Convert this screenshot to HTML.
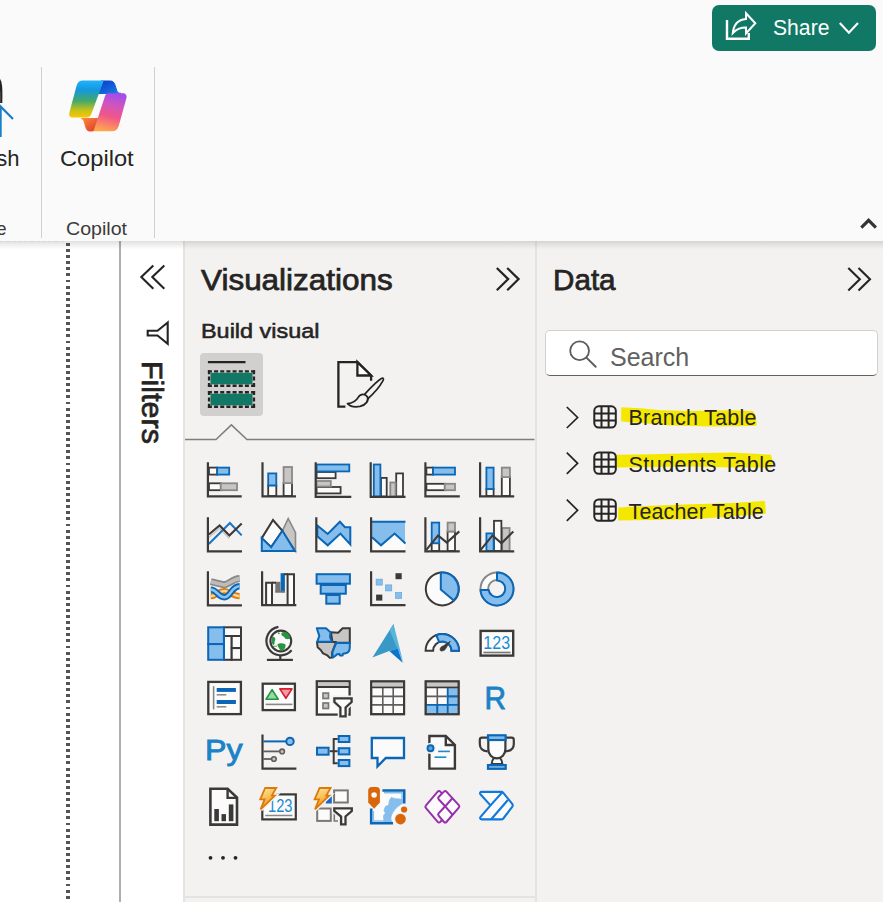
<!DOCTYPE html>
<html lang="en">
<head>
<meta charset="utf-8">
<title>Power BI</title>
<style>
html,body{margin:0;padding:0;}
body{width:883px;height:902px;overflow:hidden;background:#ffffff;font-family:"Liberation Sans",sans-serif;color:#252423;position:relative;}
.abs{position:absolute;}
.t{position:absolute;white-space:nowrap;line-height:1;transform-origin:0 0;}
.sb{-webkit-text-stroke:0.75px currentColor;}
svg{position:absolute;overflow:visible;left:0;top:0;}
svg text{font-family:"Liberation Sans",sans-serif;}
#ribbon{left:0;top:0;width:883px;height:240.8px;background:#fafafa;}
#ribshadow{left:0;top:240.8px;width:883px;height:9px;background:linear-gradient(rgba(0,0,0,0.12),rgba(0,0,0,0.04) 60%,rgba(0,0,0,0));}
.vsep{position:absolute;width:1px;background:#d0d0d0;top:67px;height:171px;}
#share{left:712px;top:4.5px;width:164px;height:46.5px;border-radius:7px;background:#117865;}
#vizpane{left:183px;top:241px;width:352.5px;height:661px;background:#f3f2f1;border-left:2px solid #e5e3e1;box-sizing:border-box;}
#datapane{left:535.3px;top:241px;width:348px;height:661px;background:#f3f2f1;border-left:2.2px solid #e5e3e1;box-sizing:border-box;}
#filtline{left:119.2px;top:241px;width:1.8px;height:661px;background:#b0aeac;}
#dotline{left:66.3px;top:242.9px;width:3.6px;height:660px;background:repeating-linear-gradient(#555 0,#555 2.9px,transparent 2.9px,transparent 6.1px);}
#dashtop{left:0;top:240.9px;width:66px;height:1px;background:repeating-linear-gradient(90deg,#d8d8d8 0,#d8d8d8 4px,transparent 4px,transparent 6px);}
#search{left:545px;top:330px;width:333px;height:45.8px;background:#fff;border:1px solid #d1d1d1;border-bottom:1.5px solid #616161;border-radius:5px;box-sizing:border-box;}
#seltab{left:200px;top:352.8px;width:62.6px;height:62.8px;border-radius:4px;background:#d2d0ce;}
</style>
</head>
<body>
<!-- RIBBON -->
<div id="ribbon" class="abs"></div>
<div class="vsep" style="left:40.5px"></div>
<div class="vsep" style="left:154px"></div>
<div id="share" class="abs"></div>
<div class="t" style="left:773px;top:17px;font-size:22.5px;color:#fff;transform:scaleX(0.94);">Share</div>
<div class="t" style="left:60px;top:148px;font-size:22px;transform:scaleX(1.075);">Copilot</div>
<div class="t" style="left:66px;top:220px;font-size:18px;color:#3b3a39;transform:scaleX(1.09);">Copilot</div>
<div class="abs" style="left:0;top:140px;width:19.5px;height:34px;overflow:hidden;"><div class="t" style="right:0;top:8px;font-size:22px;">Refresh</div></div>
<div class="abs" style="left:0;top:212px;width:6.5px;height:28px;overflow:hidden;"><div class="t" style="right:0;top:8px;font-size:18px;color:#3b3a39;">Home</div></div>
<!-- CANVAS -->
<div id="dotline" class="abs"></div>
<div id="filtline" class="abs"></div>
<div id="vizpane" class="abs"></div>
<div id="datapane" class="abs"></div>
<div id="ribshadow" class="abs"></div>
<div id="dashtop" class="abs"></div>
<!-- FILTERS -->
<div class="t sb" style="left:166.5px;top:361px;font-size:30px;transform:rotate(90deg) scaleX(1.015);">Filters</div>
<!-- VIZ PANE -->
<div class="t sb" style="left:200.6px;top:264px;font-size:30.4px;transform:scaleX(1.035);">Visualizations</div>
<div class="t sb" style="left:201.2px;top:320px;font-size:21px;-webkit-text-stroke-width:0.55px;transform:scaleX(1.115);">Build visual</div>
<div id="seltab" class="abs"></div>
<!-- DATA PANE -->
<div class="t sb" style="left:553px;top:264px;font-size:30.4px;transform:scaleX(0.975);">Data</div>
<div id="search" class="abs"></div>
<div class="t" style="left:610px;top:344.5px;font-size:25px;color:#616161;">Search</div>
<!-- chrome icons -->
<svg width="883" height="902" viewBox="0 0 883 902">
<defs>
<linearGradient id="cpL" x1="0" y1="0" x2="0" y2="1"><stop offset="0" stop-color="#22b2fb"/><stop offset="0.25" stop-color="#1598e0"/><stop offset="0.55" stop-color="#44a86a"/><stop offset="0.8" stop-color="#c4c21c"/><stop offset="1" stop-color="#f7c800"/></linearGradient>
<linearGradient id="cpR" x1="0.6" y1="0" x2="0.4" y2="1"><stop offset="0" stop-color="#a44dea"/><stop offset="0.3" stop-color="#cf55bd"/><stop offset="0.6" stop-color="#f0558a"/><stop offset="1" stop-color="#ffa64d"/></linearGradient>
<linearGradient id="cpT" x1="0" y1="0" x2="1" y2="1"><stop offset="0" stop-color="#0a3ac8"/><stop offset="1" stop-color="#1a80e6"/></linearGradient>
<linearGradient id="cpB" x1="0" y1="0" x2="1" y2="1"><stop offset="0" stop-color="#ff8a3d"/><stop offset="1" stop-color="#d93a2a"/></linearGradient>
</defs>
<!-- highlights -->
<polygon fill="#f5e800" points="621.2,407.2 640.6,408.2 661,410.3 691.5,410.9 732.3,410.3 752.7,410.9 755.7,415.4 756.8,425.6 752.7,426 712,426.6 671,425.6 640.6,423.1 621.2,421.5"/>
<polygon fill="#f5e800" points="616.300,454.700 650.800,454.300 691.500,453.200 732.300,452.600 771,454.700 773,462.400 772,467.500 732.300,467.500 691.500,466.500 650.800,467.100 616.300,467.500"/>
<polygon fill="#f5e800" points="618.200,507.400 650.800,505.800 691.500,504.300 732.300,502.900 764.900,500.900 765.900,513.500 732.300,516.600 691.500,519.200 650.800,520 618.200,520.600"/>
<!-- share icon -->
<path d="M727,20 V38.8 H748.8 V33" fill="none" stroke="#fff" stroke-width="2.4"/>
<path d="M746,13.2 L755.3,23.3 L746,33.4 V27.6 C740,27.6 736,29.6 732.8,33.2 C733.5,25 738,19.6 746,18.9 Z" fill="none" stroke="#fff" stroke-width="2" stroke-linejoin="miter"/>
<path d="M839.8,23 L848.9,32.6 L858,23" fill="none" stroke="#fff" stroke-width="2.1"/>
<!-- ribbon collapse caret -->
<path d="M861.3,227.6 L868.6,220.3 L875.9,227.6" fill="none" stroke="#333" stroke-width="3.1"/>
<!-- left cut icon -->
<path d="M-2,78.5 C1.5,80 1.5,90 1.2,103" fill="none" stroke="#252423" stroke-width="2.2"/>
<path d="M0.6,137 V106.5 L13,119" fill="none" stroke="#1a7fc9" stroke-width="2.2"/>
<!-- copilot logo -->
<path d="M101,81 H110.500 C113,81 114,82.500 114.800,84.500 L116.800,90.500 C117.400,92.400 118.500,93.400 121,93.400 L97,93.600 Z" fill="url(#cpT)" stroke="url(#cpT)" stroke-width="1" stroke-linejoin="round"/>
<path d="M81.500,118.500 H98.500 L95,129 C94.400,130.500 93.300,131 91.500,131 H90 C88,131 86.800,130.200 86.200,128.200 L84.300,122 C83.800,120.300 83,119 81.500,118.500 Z" fill="url(#cpB)" stroke="url(#cpB)" stroke-width="1" stroke-linejoin="round"/>
<path d="M83,80.500 H103.800 L91.300,114 C90.500,116.300 89,117.500 86.500,117.500 H73 C70,117.500 68.600,115.500 69.400,112.500 L76.500,86 C77.500,82.300 79.500,80.500 83,80.500 Z" fill="url(#cpL)"/>
<path d="M108.500,93.300 H122.500 C125.800,93.300 127.200,95.300 126.400,98.300 L118.700,126 C117.700,129.600 115.500,131.300 112,131.300 H93.500 L104.700,97 C105.500,94.500 106.500,93.300 108.500,93.300 Z" fill="url(#cpR)"/>
<!-- filters chevron -->
<path d="M153.3,265.4 L141.3,277.1 L153.3,288.8 M164.3,265.4 L152.3,277.1 L164.3,288.8" fill="none" stroke="#252423" stroke-width="2.1"/>
<!-- filter funnel rotated -->
<path d="M167.7,322.5 L157.5,330.7 H147.7 V335.5 H157.5 L167.7,343.7 Z" fill="none" stroke="#252423" stroke-width="2.1" stroke-linejoin="miter"/>
<!-- viz chevron -->
<path d="M496.8,268 L508.2,279.1 L496.8,290.2 M507.2,268 L518.6,279.1 L507.2,290.2" fill="none" stroke="#252423" stroke-width="2.2"/>
<!-- data chevron -->
<path d="M848.3,268.1 L859.8,279.3 L848.3,290.5 M858.5,268.1 L870,279.3 L858.5,290.5" fill="none" stroke="#252423" stroke-width="2.1"/>
<!-- selected tab icon -->
<path d="M207.900,362.100 H245.500" stroke="#252423" stroke-width="2.300"/>
<rect x="210.500" y="372.800" width="42" height="11.500" fill="#117865"/>
<rect x="210.500" y="393.700" width="42" height="11.600" fill="#117865"/>
<path d="M207.9,371.34999999999997 H255.1 M207.9,385.75 H255.1" fill="none" stroke="#252423" stroke-width="2.300" stroke-dasharray="4 2.170"/>
<path d="M209.05,370.2 V386.9 M253.95,370.2 V386.9" fill="none" stroke="#252423" stroke-width="2.300" stroke-dasharray="4 2.350"/>
<path d="M207.9,392.25 H255.1 M207.9,406.75 H255.1" fill="none" stroke="#252423" stroke-width="2.300" stroke-dasharray="4 2.170"/>
<path d="M209.05,391.1 V407.9 M253.95,391.1 V407.9" fill="none" stroke="#252423" stroke-width="2.300" stroke-dasharray="4 2.350"/>
<!-- tab line with notch -->
<path d="M185,439.500 H216 L231.400,424.900 L246.900,439.500 H534.500" fill="none" stroke="#807e7c" stroke-width="1.500"/>
<!-- format icon -->
<path d="M345.400,406.700 H338.400 V362.100 H357.400 L371.100,375.400 V380.800" fill="none" stroke="#252423" stroke-width="2.300"/>
<path d="M357.400,362.100 V375.500 H371.100 Z" fill="#fff" stroke="#252423" stroke-width="2.300"/>
<path d="M364.300,394.600 C370,388.500 378,380.500 381.300,378.600 C383.300,377.500 384,378.800 383,380.700 C380,386.300 373,394.300 367.600,399" fill="none" stroke="#252423" stroke-width="1.700"/>
<path d="M347.500,403.600 C353,403.200 356,401.300 358.200,397.400 C360.400,393.300 365.300,393.600 367.300,396.800 C369.300,400.300 366,405 360,406.400 C355,407.400 350,406.200 347.500,403.600 Z" fill="none" stroke="#252423" stroke-width="1.800" stroke-linejoin="round"/>
<!-- bottom line of viz pane -->
<path d="M185,897 H535.300" stroke="#e5e3e1" stroke-width="1.900"/>
<!-- ellipsis -->
<circle cx="210.500" cy="857.800" r="1.900" fill="#252423"/><circle cx="223" cy="857.800" r="1.900" fill="#252423"/><circle cx="235.500" cy="857.800" r="1.900" fill="#252423"/>
<!-- search icon -->
<circle cx="579.600" cy="350.800" r="9.400" fill="none" stroke="#5c5c5c" stroke-width="1.800"/>
<path d="M586.400,357.600 L595.700,366.800" stroke="#5c5c5c" stroke-width="1.900" stroke-linecap="round"/>
<!-- tree chevrons + table icons -->
<g fill="none" stroke="#252423" stroke-width="1.700">
<path d="M566.800,407 L577.600,417.500 L566.800,428"/>
<path d="M566.800,452.700 L577.600,463.300 L566.800,473.900"/>
<path d="M566.800,499.700 L577.600,510.300 L566.800,520.900"/>
</g>
<g fill="none" stroke="#252423" stroke-width="2">
<g id="tbl1"><rect x="594.300" y="406.300" width="21.500" height="21.300" rx="4.500"/><path d="M601.500,406.300 V427.600 M608.600,406.300 V427.600 M594.300,413.400 H615.800 M594.300,420.500 H615.800"/></g>
<g transform="translate(0,46.200)"><rect x="594.300" y="406.300" width="21.500" height="21.300" rx="4.500"/><path d="M601.500,406.300 V427.600 M608.600,406.300 V427.600 M594.300,413.400 H615.800 M594.300,420.500 H615.800"/></g>
<g transform="translate(0,93.200)"><rect x="594.300" y="406.300" width="21.500" height="21.300" rx="4.500"/><path d="M601.500,406.300 V427.600 M608.600,406.300 V427.600 M594.300,413.400 H615.800 M594.300,420.500 H615.800"/></g>
</g>
</svg>
<!-- visualization gallery icons -->
<svg width="883" height="902" viewBox="0 0 883 902">
<g id="ic-stackedbar">
<rect x="209" y="467.6" width="8.2" height="7" fill="#fbfbfb" stroke="#3b3a39" stroke-width="1.8"/>
<rect x="217.2" y="467.6" width="12" height="7" fill="#85beec" stroke="#0b66b5" stroke-width="1.8"/>
<rect x="209" y="483.3" width="11.8" height="6.9" fill="#fbfbfb" stroke="#3b3a39" stroke-width="1.8"/>
<rect x="220.8" y="483.3" width="16.2" height="6.9" fill="#c8c6c4" stroke="#8a8886" stroke-width="1.8"/>
<path d="M207.9,462.2 V496.4 H241.7" fill="none" stroke="#3b3a39" stroke-width="2.2" />
</g>
<g id="ic-stackedcol">
<rect x="268.2" y="485.4" width="8.1" height="10.6" fill="#fbfbfb" stroke="#3b3a39" stroke-width="1.8"/>
<rect x="268.2" y="473.4" width="8.1" height="12" fill="#85beec" stroke="#0b66b5" stroke-width="1.8"/>
<rect x="283.6" y="483.1" width="8.4" height="12.9" fill="#fbfbfb" stroke="#3b3a39" stroke-width="1.8"/>
<rect x="283.6" y="467" width="8.4" height="16.1" fill="#c8c6c4" stroke="#8a8886" stroke-width="1.8"/>
<path d="M262.5,462.2 V496.4 H296" fill="none" stroke="#3b3a39" stroke-width="2.2" />
</g>
<g id="ic-clusteredbar">
<rect x="316.6" y="472" width="19" height="6.2" fill="#fbfbfb" stroke="#3b3a39" stroke-width="1.8"/>
<rect x="316.6" y="464.5" width="32.7" height="6.9" fill="#85beec" stroke="#0b66b5" stroke-width="1.8"/>
<rect x="316.6" y="487" width="24" height="6.4" fill="#fbfbfb" stroke="#3b3a39" stroke-width="1.8"/>
<rect x="316.6" y="481" width="14.2" height="5.5" fill="#c8c6c4" stroke="#8a8886" stroke-width="1.8"/>
<path d="M315.7,462.2 V496.9 H351.3" fill="none" stroke="#3b3a39" stroke-width="2.2" />
</g>
<g id="ic-clusteredcol">
<rect x="381" y="477.9" width="5.7" height="18.6" fill="#fbfbfb" stroke="#3b3a39" stroke-width="1.8"/>
<rect x="373.8" y="464.5" width="6.6" height="32" fill="#85beec" stroke="#0b66b5" stroke-width="1.8"/>
<rect x="396.2" y="473.4" width="6.8" height="23.1" fill="#fbfbfb" stroke="#3b3a39" stroke-width="1.8"/>
<rect x="390.3" y="482.5" width="5.3" height="14" fill="#c8c6c4" stroke="#8a8886" stroke-width="1.8"/>
<path d="M370.7,462.2 V496.9 H405.5" fill="none" stroke="#3b3a39" stroke-width="2.2" />
</g>
<g id="ic-100bar">
<rect x="426.4" y="467.6" width="6.6" height="7" fill="#fbfbfb" stroke="#3b3a39" stroke-width="1.8"/>
<rect x="433" y="467.6" width="22" height="7" fill="#85beec" stroke="#0b66b5" stroke-width="1.8"/>
<rect x="426.4" y="483.8" width="18.4" height="6.4" fill="#fbfbfb" stroke="#3b3a39" stroke-width="1.8"/>
<rect x="444.8" y="483.8" width="10.2" height="6.4" fill="#c8c6c4" stroke="#8a8886" stroke-width="1.8"/>
<path d="M425.4,462.2 V496.4 H459.8" fill="none" stroke="#3b3a39" stroke-width="2.2" />
</g>
<g id="ic-100col">
<rect x="486.4" y="489" width="7.2" height="7" fill="#fbfbfb" stroke="#3b3a39" stroke-width="1.8"/>
<rect x="486.4" y="467.6" width="7.2" height="21.4" fill="#85beec" stroke="#0b66b5" stroke-width="1.8"/>
<rect x="501.8" y="477.1" width="8.1" height="18.9" fill="#fbfbfb" stroke="#3b3a39" stroke-width="1.8"/>
<rect x="501.8" y="467.6" width="8.1" height="9.5" fill="#c8c6c4" stroke="#8a8886" stroke-width="1.8"/>
<path d="M480.1,462.2 V496.4 H514.2" fill="none" stroke="#3b3a39" stroke-width="2.2" />
</g>
<g id="ic-line">
<path d="M208.8,537.5 L219.6,528.4 L229.4,538.4" fill="none" stroke="#c8c6c4" stroke-width="1.5" />
<path d="M208.8,544 L229.9,523 L241.7,535.4" fill="none" stroke="#1a76c4" stroke-width="2.1" />
<path d="M208.8,534.5 L219.6,525.4 L229.4,535.4 L241.7,523.6" fill="none" stroke="#3b3a39" stroke-width="2.1" />
<path d="M207.9,517.2 V551.3 H242" fill="none" stroke="#3b3a39" stroke-width="2.2" />
</g>
<g id="ic-area">
<path d="M282.4,530.8 L288.2,518.5 L295.5,532.6 L295.5,551 Z" fill="#c8c6c4" stroke="#8a8886" stroke-width="1.6" stroke-linejoin="miter"/>
<path d="M261.8,538.1 L273,520 L282.4,530.8 L271.2,547.1 Z" fill="#fbfbfb" stroke="#3b3a39" stroke-width="2" stroke-linejoin="miter"/>
<path d="M261.8,538.1 L271.2,547.1 L282.4,530.8 L294.8,551 L261.8,551 Z" fill="#85beec" stroke="#0b66b5" stroke-width="2" stroke-linejoin="miter"/>
</g>
<g id="ic-stackedarea">
<path d="M317.3,536.3 L327.7,545.3 L340.4,533.6 L350.8,544.4 L350.8,550.5 L317.3,550.5 Z" fill="#fbfbfb" stroke="none" stroke-width="0" stroke-linejoin="miter"/>
<path d="M317.3,525.4 L327.7,533.9 L339.9,521.8 L345,527.2 L350.3,527.2 L350.3,544.4 L340.4,533.6 L327.7,545.3 L317.3,536.3 Z" fill="#85beec" stroke="#0b66b5" stroke-width="2" stroke-linejoin="miter"/>
<path d="M316.3,517.2 V551.3 H350.8" fill="none" stroke="#3b3a39" stroke-width="2.2" />
</g>
<g id="ic-100area">
<path d="M372,537.2 L381,545.3 L394.6,533.6 L405,543.5 L405,550.5 L372,550.5 Z" fill="#fbfbfb" stroke="none" stroke-width="0" stroke-linejoin="miter"/>
<path d="M372,521.8 L405,521.8 L405,543.5 L394.6,533.6 L381,545.3 L372,537.2 Z" fill="#85beec" stroke="none" stroke-width="0" stroke-linejoin="miter"/>
<path d="M372,521.8 L405.5,521.8" fill="none" stroke="#0b66b5" stroke-width="2" />
<path d="M372,537.2 L381,545.3 L394.6,533.6 L405.5,543.5" fill="none" stroke="#0b66b5" stroke-width="2" />
<path d="M371.1,517.2 V551.3 H405.5" fill="none" stroke="#3b3a39" stroke-width="2.2" />
</g>
<g id="ic-linestackedcol">
<rect x="431.7" y="543.2" width="7.5" height="7.8" fill="#fbfbfb" stroke="#3b3a39" stroke-width="1.8"/>
<rect x="431.7" y="522.6" width="7.5" height="20.6" fill="#85beec" stroke="#0b66b5" stroke-width="1.8"/>
<rect x="447.6" y="531.4" width="7.4" height="19.6" fill="#fbfbfb" stroke="#3b3a39" stroke-width="1.8"/>
<rect x="447.6" y="522.6" width="7.4" height="8.8" fill="#c8c6c4" stroke="#8a8886" stroke-width="1.8"/>
<path d="M425.4,517.2 V551.3 H459.8" fill="none" stroke="#3b3a39" stroke-width="2.2" />
<path d="M426.3,549.9 L438.1,535.4 L446.8,542.6 L459.3,531.4" fill="none" stroke="#3b3a39" stroke-width="2.1" />
</g>
<g id="ic-lineclusteredcol">
<rect x="502.2" y="528" width="7.4" height="23" fill="#c8c6c4" stroke="#8a8886" stroke-width="1.8"/>
<rect x="494" y="520.8" width="7.4" height="30.2" fill="#fbfbfb" stroke="#3b3a39" stroke-width="1.8"/>
<rect x="486.4" y="533.4" width="7.2" height="17.6" fill="#85beec" stroke="#0b66b5" stroke-width="1.8"/>
<path d="M480.1,517.2 V551.3 H514.2" fill="none" stroke="#3b3a39" stroke-width="2.2" />
<path d="M480.7,549.9 L492.5,535.4 L501.5,543.2 L513.3,531.4" fill="none" stroke="#3b3a39" stroke-width="2.1" />
</g>
<g id="ic-ribbon">
<path d="M210.8,596.2 C216,596.2 219,591 224.3,591 C229.6,591 232.600,596.200 239.600,596.200" fill="none" stroke="#e07c0a" stroke-width="6.2" />
<path d="M210.8,596.2 C216,596.2 219,591 224.3,591 C229.6,591 232.600,596.200 239.600,596.200" fill="none" stroke="#fbd38a" stroke-width="2.4" />
<path d="M210.8,589.6 C217,589.6 218,597.3 224.3,597.3 C231,597.300 231,586.200 239.600,586.200" fill="none" stroke="#0b66b5" stroke-width="6.4" />
<path d="M210.8,589.6 C217,589.6 218,597.3 224.3,597.3 C231,597.300 231,586.200 239.600,586.200" fill="none" stroke="#8cc4f0" stroke-width="2.6" />
<path d="M210.8,581.7 L224.3,585 C230,583.500 233,579 239.600,578.600" fill="none" stroke="#8a8886" stroke-width="7" />
<path d="M210.8,581.7 L224.3,585 C230,583.500 233,579 239.600,578.600" fill="none" stroke="#bebbb8" stroke-width="3.6" />
<path d="M207.9,571.2 V605.4 H241.9" fill="none" stroke="#3b3a39" stroke-width="2.2" />
</g>
<g id="ic-waterfall">
<path d="M266.1,605 V582.7 H272 V605" fill="#fbfbfb" stroke="#3b3a39" stroke-width="2" />
<rect x="275.3" y="581.8" width="5.1" height="10.7" fill="#767472" stroke="none" stroke-width="0"/>
<rect x="280.6" y="573.2" width="4.3" height="19.3" fill="#0b66b5" stroke="none" stroke-width="0"/>
<path d="M287.600,605 V574.200 H294 V605" fill="#fbfbfb" stroke="#3b3a39" stroke-width="2" />
<path d="M272,582.7 L276,582.7" fill="none" stroke="#3b3a39" stroke-width="2" />
<path d="M275.3,591.6 L284.9,591.6" fill="none" stroke="#767472" stroke-width="1.8" />
<path d="M284,574.2 L288,574.2" fill="none" stroke="#3b3a39" stroke-width="2" />
<path d="M262.1,571.2 V605.2 H296.3" fill="none" stroke="#3b3a39" stroke-width="2.2" />
</g>
<g id="ic-funnel">
<rect x="316.6" y="574.2" width="33.3" height="9.5" fill="#85beec" stroke="#0b66b5" stroke-width="2"/>
<rect x="320.7" y="585" width="25.1" height="8.7" fill="#85beec" stroke="#0b66b5" stroke-width="2"/>
<rect x="326.3" y="595" width="13.4" height="8.7" fill="#85beec" stroke="#0b66b5" stroke-width="2"/>
</g>
<g id="ic-scatter">
<rect x="395.5" y="573.2" width="6.2" height="6" fill="#3b3a39"/>
<rect x="376.1" y="579.1" width="6.2" height="6" fill="#85beec" stroke="#5aa2dc" stroke-width="0.6"/>
<rect x="385.6" y="584.9" width="6.2" height="6" fill="#85beec" stroke="#5aa2dc" stroke-width="0.6"/>
<rect x="395.5" y="592.5" width="6.2" height="6" fill="#85beec" stroke="#5aa2dc" stroke-width="0.6"/>
<rect x="376.1" y="594.6" width="6.2" height="6" fill="#3b3a39"/>
<path d="M371.1,571.3 V605.2 H405.5" fill="none" stroke="#3b3a39" stroke-width="2.2" />
</g>
<g id="ic-pie">
<circle cx="442.300" cy="588.900" r="16.500" fill="#fbfbfb" stroke="#3b3a39" stroke-width="2"/>
<path d="M440.800,589.500 V572.500 A16.500,16.500 0 0 1 453.800,600.600 Z" fill="#85beec" stroke="#0b66b5" stroke-width="2" stroke-linejoin="round"/>
</g>
<g id="ic-donut">
<circle cx="497" cy="588.900" r="12.700" fill="none" stroke="#8a8886" stroke-width="9.600"/>
<circle cx="497" cy="588.900" r="12.700" fill="none" stroke="#fbfbfb" stroke-width="5.600"/>
<path d="M497,572.400 A16.500,16.500 0 1 1 480.500,590 H488.700 A8.300,8.300 0 1 0 497,580.500 Z" fill="#85beec" stroke="#0b66b5" stroke-width="2" stroke-linejoin="round"/>
</g>
<g id="ic-treemap">
<rect x="223.9" y="627.3" width="17.1" height="8.7" fill="#fbfbfb" stroke="#3b3a39" stroke-width="2"/>
<rect x="223.9" y="636" width="7.8" height="23.8" fill="#fbfbfb" stroke="#3b3a39" stroke-width="2"/>
<rect x="231.7" y="636" width="9.3" height="12.1" fill="#fbfbfb" stroke="#3b3a39" stroke-width="2"/>
<rect x="231.7" y="648.1" width="9.3" height="11.7" fill="#fbfbfb" stroke="#3b3a39" stroke-width="2"/>
<rect x="208.2" y="627.3" width="15.7" height="16.8" fill="#85beec" stroke="#0b66b5" stroke-width="2"/>
<rect x="208.2" y="644.1" width="15.7" height="15.7" fill="#85beec" stroke="#0b66b5" stroke-width="2"/>
</g>
<g id="ic-map">
<circle cx="280.800" cy="641" r="10.400" fill="#fbfbfb" stroke="#3b3a39" stroke-width="2.100"/>
<path d="M281.600,632.800 C283,631.600 286,631.800 288,633.500 C290,635.500 290.600,637.500 289.800,639.300 C288.500,638.600 287.500,639.500 286,639 C284.500,638.500 284.500,636.800 283,636.300 C281.500,635.800 281,634 281.600,632.800 Z" fill="#2a9440" stroke="none" stroke-width="0" />
<path d="M278.300,632.300 L279.800,633 L279.300,634.300 L278,634 Z" fill="#2a9440" stroke="none" stroke-width="0" />
<path d="M272.500,636.800 C274,636.500 275.200,637.500 275.300,639 C275.400,640.500 274.300,641.500 274.500,643 C274.700,644 274,645 273,645 C271.800,643.500 271.300,641 271.500,639 C271.600,638 272,637.200 272.500,636.800 Z" fill="#2a9440" stroke="none" stroke-width="0" />
<path d="M277.300,644.500 C279,643 283,643 285.300,644.300 C286,646 285.300,648.500 283.500,650 C282,651 280,650.500 279.500,649 C279,647.500 277.500,646.500 277.300,644.500 Z" fill="#2a9440" stroke="none" stroke-width="0" />
<path d="M273,645.800 H277 V646.600 H273 Z" fill="#2a9440" stroke="none" stroke-width="0" />
<path d="M278.400,626.900 A14.300,14.300 0 1 0 291.600,650.300" fill="none" stroke="#3b3a39" stroke-width="2.2" />
<path d="M280.3,655.8 L280.3,659.9" fill="none" stroke="#3b3a39" stroke-width="2.2" />
<path d="M266.9,659.9 L292.9,659.9" fill="none" stroke="#3b3a39" stroke-width="2.2" />
</g>
<g id="ic-filledmap">
<path d="M330.900,632.300 L338.200,632.800 L342.600,628.300 H349.800 V642.800 H332.600 Z" fill="#c8c6c4" stroke="#3b3a39" stroke-width="2" stroke-linejoin="miter"/>
<path d="M317,642.100 H336 L333.700,648.300 L332,652.800 L332.300,657.500 L329.700,657.700 L326.900,655.100 L323,653.400 L320.700,650 L317.600,647.200 Z" fill="#c8c6c4" stroke="#3b3a39" stroke-width="2" stroke-linejoin="round"/>
<path d="M316.800,628.300 H326 L330.500,632.200 L330,637 L331.800,641.700 H317.300 L319.300,635.900 Z" fill="#85beec" stroke="#0b66b5" stroke-width="2" stroke-linejoin="round"/>
<path d="M336.300,643 H349.800 V647.200 C349.800,650.500 348,652.800 345.600,653.300 L343,653.800 L342.600,655.500 L340,655.500 L339.600,654 L337,654.300 L335.500,655.700 L333,657.500 L332.300,652.800 L333.900,648.300 Z" fill="#85beec" stroke="#0b66b5" stroke-width="2" stroke-linejoin="round"/>
</g>
<g id="ic-azuremap">
<path d="M393.5,624 L372.4,657.4 L389.3,651.1 L397.8,648.5 Z" fill="#3999c6" stroke="none" stroke-width="0" stroke-linejoin="miter"/>
<path d="M393.5,624 L389.6,630.3 L396.7,647.2 L397.8,648.5 L403.5,663.6 Z" fill="#59b4d9" stroke="none" stroke-width="0" stroke-linejoin="miter"/>
<path d="M389.3,651.1 L397.8,648.5 L402.6,662.8 Z" fill="#0a74cf" stroke="none" stroke-width="0" stroke-linejoin="miter"/>
</g>
<g id="ic-gauge">
<path d="M425.600,650.800 A16.700,16.700 0 0 1 459,650.800 H451.500 A9.200,9.200 0 0 0 433.100,650.800 Z" fill="#fbfbfb" stroke="#3b3a39" stroke-width="2" stroke-linejoin="miter"/>
<path d="M436.300,635.200 A16.700,16.700 0 0 1 459,650.800 H451.500 A9.200,9.200 0 0 0 439.200,642.100 Z" fill="#85beec" stroke="#0b66b5" stroke-width="2" stroke-linejoin="miter"/>
<path d="M440.300,650.500 C439.500,648.500 441,646.500 443.500,645.800 L450.300,641.300 L446,648 C445.500,650.300 441.500,651.800 440.300,650.500 Z" fill="#3b3a39" stroke="#3b3a39" stroke-width="0.8" stroke-linejoin="round"/>
</g>
<g id="ic-card">
<rect x="480.6" y="630.9" width="32.6" height="24.7" fill="#fbfbfb" stroke="#3b3a39" stroke-width="2.4"/>
<text x="483.300" y="649" font-size="18" fill="#1b8ad3" textLength="26.800" lengthAdjust="spacingAndGlyphs">123</text>
<path d="M483.4,652.5 L510.6,652.5" fill="none" stroke="#7a7876" stroke-width="1.7" />
</g>
<g id="ic-multirow">
<rect x="208.3" y="681.9" width="32.6" height="32.2" fill="#fbfbfb" stroke="#3b3a39" stroke-width="2.3"/>
<path d="M213.6,686.2 L213.6,709.4" fill="none" stroke="#8a8886" stroke-width="1.6" />
<rect x="216.7" y="688" width="19.2" height="3.9" fill="#0b66b5" stroke="none" stroke-width="0"/>
<path d="M216.7,694.8 L226.3,694.8" fill="none" stroke="#8a8886" stroke-width="1.5" />
<rect x="216.7" y="700" width="19.2" height="4" fill="#0b66b5" stroke="none" stroke-width="0"/>
<path d="M216.7,706.8 L226.3,706.8" fill="none" stroke="#8a8886" stroke-width="1.5" />
</g>
<g id="ic-kpi">
<rect x="262.7" y="683.7" width="32.2" height="26.4" fill="#fbfbfb" stroke="#3b3a39" stroke-width="2.3"/>
<path d="M266,699.2 L272.1,689.6 L278.2,699.2 Z" fill="#9bd6a8" stroke="#1e9a3c" stroke-width="1.6" stroke-linejoin="round"/>
<path d="M279.8,688.9 L292,688.9 L285.9,698.3 Z" fill="#f59aa2" stroke="#d4202c" stroke-width="1.6" stroke-linejoin="round"/>
<path d="M265.6,704.4 L292.4,704.4" fill="none" stroke="#8a8886" stroke-width="1.6" />
</g>
<g id="ic-slicer">
<rect x="316.8" y="681.3" width="32.8" height="33.3" fill="#fbfbfb" stroke="#3b3a39" stroke-width="2.3"/>
<rect x="318" y="682.4" width="30.4" height="3.6" fill="#c8c6c4" stroke="none" stroke-width="0"/>
<path d="M316.8,687 L349.6,687" fill="none" stroke="#3b3a39" stroke-width="2" />
<rect x="323" y="693.1" width="5.5" height="5.4" fill="#c8c6c4" stroke="#7a7876" stroke-width="1.7"/>
<rect x="323" y="703" width="5.5" height="5.5" fill="#c8c6c4" stroke="#7a7876" stroke-width="1.7"/>
<path d="M334.400,698.300 H351.600 V702 L345.600,707.500 V716.300 H340.400 V707.500 L334.400,702 Z" fill="#f3f2f1" stroke="#f3f2f1" stroke-width="5.4" stroke-linejoin="miter"/>
<path d="M334.400,698.300 H351.600 V702 L345.600,707.500 V716.300 H340.400 V707.500 L334.400,702 Z" fill="#fbfbfb" stroke="#3b3a39" stroke-width="2.3" stroke-linejoin="miter"/>
</g>
<g id="ic-table">
<rect x="371.2" y="681.4" width="32.9" height="32.8" fill="#fbfbfb" stroke="#3b3a39" stroke-width="2"/>
<rect x="372.2" y="682.4" width="30.9" height="4" fill="#c8c6c4" stroke="none" stroke-width="0"/>
<path d="M382.8,687.3 L382.8,714" fill="none" stroke="#605e5c" stroke-width="1.6" />
<path d="M393.2,687.3 L393.2,714" fill="none" stroke="#605e5c" stroke-width="1.6" />
<path d="M371.2,696.4 L404.1,696.4" fill="none" stroke="#605e5c" stroke-width="1.6" />
<path d="M371.2,704.9 L404.1,704.9" fill="none" stroke="#605e5c" stroke-width="1.6" />
<path d="M371.2,687.3 L404.1,687.3" fill="none" stroke="#3b3a39" stroke-width="1.8" />
<rect x="371.2" y="681.4" width="32.9" height="32.8" fill="none" stroke="#3b3a39" stroke-width="2"/>
</g>
<g id="ic-matrix">
<rect x="425.7" y="681.4" width="32.9" height="32.8" fill="#fbfbfb" stroke="#3b3a39" stroke-width="2"/>
<rect x="426.7" y="682.4" width="30.9" height="4" fill="#c8c6c4" stroke="none" stroke-width="0"/>
<rect x="447.7" y="688" width="9.9" height="25.2" fill="#85beec" stroke="none" stroke-width="0"/>
<rect x="426.7" y="704.9" width="30.9" height="8.3" fill="#85beec" stroke="none" stroke-width="0"/>
<path d="M437.3,687.3 L437.3,714" fill="none" stroke="#605e5c" stroke-width="1.6" />
<path d="M447.7,687.3 L447.7,714" fill="none" stroke="#0b66b5" stroke-width="1.8" />
<path d="M425.7,696.4 L458.6,696.4" fill="none" stroke="#605e5c" stroke-width="1.6" />
<path d="M425.7,704.9 L458.6,704.9" fill="none" stroke="#0b66b5" stroke-width="1.8" />
<path d="M437.3,704.9 L437.3,714" fill="none" stroke="#0b66b5" stroke-width="1.8" />
<path d="M447.7,696.4 L458.6,696.4" fill="none" stroke="#0b66b5" stroke-width="1.8" />
<path d="M425.7,687.3 L458.6,687.3" fill="none" stroke="#3b3a39" stroke-width="1.8" />
<rect x="425.7" y="681.4" width="32.9" height="32.8" fill="none" stroke="#3b3a39" stroke-width="2"/>
</g>
<g id="ic-r">
<text x="484.500" y="709.400" font-size="31.500" fill="#1b82c8" stroke="#1b82c8" stroke-width="0.900" textLength="21.500" lengthAdjust="spacingAndGlyphs">R</text>
</g>
<g id="ic-py">
<text x="205" y="759.900" font-size="30.300" fill="#1b82c8" stroke="#1b82c8" stroke-width="0.900" textLength="37.500" lengthAdjust="spacingAndGlyphs">Py</text>
</g>
<g id="ic-keyinfl">
<path d="M263.5,741.4 L286,741.4" fill="none" stroke="#0b66b5" stroke-width="2" />
<circle cx="290" cy="741.400" r="3.700" fill="#85beec" stroke="#0b66b5" stroke-width="2"/>
<path d="M263.5,751.4 L279.7,751.4" fill="none" stroke="#605e5c" stroke-width="1.8" />
<circle cx="282.100" cy="751.400" r="2.300" fill="#c8c6c4" stroke="#605e5c" stroke-width="1.6"/>
<path d="M263.5,759 L271.6,759" fill="none" stroke="#605e5c" stroke-width="1.8" />
<circle cx="273.900" cy="759" r="2.300" fill="#c8c6c4" stroke="#605e5c" stroke-width="1.6"/>
<path d="M262.5,734.5 V768.6 H296.4" fill="none" stroke="#3b3a39" stroke-width="2.2" />
</g>
<g id="ic-decomp">
<path d="M329.6,751.2 L337.7,751.2" fill="none" stroke="#3b3a39" stroke-width="2" />
<path d="M337.700,739 H333.700 V763.200 H337.700" fill="none" stroke="#3b3a39" stroke-width="2" />
<rect x="317" y="747.7" width="11.6" height="7" fill="#85beec" stroke="#0b66b5" stroke-width="2"/>
<rect x="338.7" y="736" width="10.7" height="6" fill="#85beec" stroke="#0b66b5" stroke-width="2"/>
<rect x="338.7" y="748.2" width="10.7" height="6.2" fill="#85beec" stroke="#0b66b5" stroke-width="2"/>
<rect x="338.7" y="760" width="10.7" height="6.1" fill="#85beec" stroke="#0b66b5" stroke-width="2"/>
</g>
<g id="ic-qna">
<path d="M371.800,738 H404 V758 H385.800 L377.500,766.400 V758 H371.800 Z" fill="#fbfbfb" stroke="#0b66b5" stroke-width="2.3" stroke-linejoin="miter"/>
</g>
<g id="ic-narrative">
<path d="M429.400,736 H445.800 L454.900,745 V768.600 H429.400 Z" fill="#fbfbfb" stroke="#3b3a39" stroke-width="2.4" stroke-linejoin="miter"/>
<path d="M445.800,736 V745 H454.900" fill="none" stroke="#3b3a39" stroke-width="2.4" />
<circle cx="430.500" cy="748.300" r="5.600" fill="#f3f2f1"/>
<circle cx="430.500" cy="748.300" r="3" fill="#5aa2e0" stroke="#0b66b5" stroke-width="1.900"/>
<path d="M438.1,751.4 L449.9,751.4" fill="none" stroke="#1b8ad3" stroke-width="1.6" />
<path d="M434.5,757.2 L446.3,757.2" fill="none" stroke="#1b8ad3" stroke-width="1.6" />
</g>
<g id="ic-goals">
<path d="M488,737.700 H482 C480.500,737.700 479.800,738.400 479.800,740 V744 C479.800,748.500 483,751 487.800,751.300" fill="none" stroke="#3b3a39" stroke-width="2.2" />
<path d="M505.600,737.700 H511.600 C513.100,737.700 513.800,738.400 513.800,740 V744 C513.800,748.500 510.600,751 505.800,751.300" fill="none" stroke="#3b3a39" stroke-width="2.2" />
<path d="M494,757.800 C492.500,759.500 491.800,761.500 491.600,764 H502.400 C502.200,761.500 501.500,759.500 500,757.800 Z" fill="#fbfbfb" stroke="#3b3a39" stroke-width="2" stroke-linejoin="round"/>
<path d="M488.300,740 V749 C488.300,754.500 492,758.300 496.800,758.300 C501.600,758.300 505.400,754.500 505.400,749 V740 Z" fill="#fbfbfb" stroke="#3b3a39" stroke-width="2.2" stroke-linejoin="round"/>
<rect x="488" y="735.3" width="17.6" height="4.7" fill="#85beec" stroke="#0b66b5" stroke-width="2.2"/>
<rect x="488" y="765.1" width="17.7" height="3.7" fill="#85beec" stroke="#0b66b5" stroke-width="2.2"/>
</g>
<defs><linearGradient id="boltg" x1="0.3" y1="0" x2="0.7" y2="1"><stop offset="0" stop-color="#fde59a"/><stop offset="0.5" stop-color="#f8b84a"/><stop offset="1" stop-color="#e8860c"/></linearGradient></defs>
<g id="ic-paginated">
<path d="M210.400,788.700 H227.600 L237,797.600 V824.600 H210.400 Z" fill="#fbfbfb" stroke="#3b3a39" stroke-width="2.6" stroke-linejoin="miter"/>
<path d="M227.600,788.700 V797.900 H237" fill="none" stroke="#3b3a39" stroke-width="2.4" />
<rect x="214.3" y="809" width="4.6" height="12.2" fill="#3b3a39" stroke="none" stroke-width="0"/>
<rect x="221.5" y="814.1" width="4.5" height="7.1" fill="#3b3a39" stroke="none" stroke-width="0"/>
<rect x="228.8" y="804.4" width="4.6" height="16.8" fill="#3b3a39" stroke="none" stroke-width="0"/>
</g>
<g id="ic-cardnew">
<rect x="262.3" y="794.4" width="33.5" height="25" fill="#fbfbfb" stroke="#3b3a39" stroke-width="2.2"/>
<text x="268" y="812.300" font-size="18.500" fill="#1b8ad3" textLength="24.500" lengthAdjust="spacingAndGlyphs">123</text>
<path d="M265.2,815.5 L292.4,815.5" fill="none" stroke="#8a8886" stroke-width="1.5" />
<path d="M265.2,788 L276.2,788 L271.9,795.6 L274.8,795.6 L260.6,809.4 L264.6,799.4 L260.2,799.4 Z" fill="#f3f2f1" stroke="#f3f2f1" stroke-width="4.600" stroke-linejoin="miter"/>
<path d="M265.2,788 L276.2,788 L271.9,795.6 L274.8,795.6 L260.6,809.4 L264.6,799.4 L260.2,799.4 Z" fill="url(#boltg)" stroke="#dd7a0a" stroke-width="1.800" stroke-linejoin="miter"/>
</g>
<g id="ic-slicernew">
<rect x="334.1" y="790.4" width="13.7" height="12.1" fill="#fbfbfb" stroke="#7a7876" stroke-width="2"/>
<rect x="317.2" y="808.5" width="13.6" height="12.4" fill="#fbfbfb" stroke="#7a7876" stroke-width="2"/>
<rect x="325.8" y="796.2" width="6" height="7.3" fill="#1267d0" stroke="none" stroke-width="0"/>
<path d="M334.300,808 V821 H338" fill="none" stroke="#7a7876" stroke-width="1.6" />
<path d="M334.300,808.300 H351.800 V811 L345.500,816.500 V824.400 H341.100 V816.500 L334.300,811 Z" fill="#f3f2f1" stroke="#f3f2f1" stroke-width="5" stroke-linejoin="miter"/>
<path d="M334.300,808.300 H351.800 V811 L345.500,816.500 V824.400 H341.100 V816.500 L334.300,811 Z" fill="#fbfbfb" stroke="#3b3a39" stroke-width="2.3" stroke-linejoin="miter"/>
<path d="M319.6,788 L330.6,788 L326.3,795.6 L329.2,795.6 L315,809.4 L319,799.4 L314.6,799.4 Z" fill="#f3f2f1" stroke="#f3f2f1" stroke-width="4.600" stroke-linejoin="miter"/>
<path d="M319.6,788 L330.6,788 L326.3,795.6 L329.2,795.6 L315,809.4 L319,799.4 L314.6,799.4 Z" fill="url(#boltg)" stroke="#dd7a0a" stroke-width="1.800" stroke-linejoin="miter"/>
</g>
<g id="ic-arcgis">
<rect x="372.4" y="791.5" width="30.8" height="30.5" fill="#fbfbfb" stroke="none" stroke-width="0"/>
<path d="M391.700,797.300 C393,798.600 394,798 394.800,798.400 C396.500,799.300 398,798.600 399.400,799 L402.500,799.600 V803.500 C400.500,804.500 399.500,805.500 398.200,806.300 C396.500,807.500 395.300,809 394.300,810.300 C393,811.800 392.200,813.300 391.700,814.800 C391,816.500 390.700,818 390.900,819.400 L392,822 H384.100 C384.300,820 383.300,818 383.500,816 C383.700,814.500 385.300,814.300 385.200,813.100 C385.100,812 383.900,811.500 384.100,810.300 C384.300,808.800 385,807.300 385.800,806.300 C386.600,805.300 388.200,806 388.600,805.200 C389.300,804 388.700,802.500 389.200,801.300 C389.700,799.800 390.500,798.300 391.700,797.300 Z" fill="#85beec" stroke="#85beec" stroke-width="0.8" stroke-linejoin="round"/>
<path d="M382.400,790.500 H404.200 V803.500" fill="none" stroke="#0b66b5" stroke-width="2.6" stroke-linejoin="miter"/>
<path d="M371.200,808.600 V823.200 H393" fill="none" stroke="#0b66b5" stroke-width="2.6" stroke-linejoin="miter"/>
<path d="M384,792.700 H402 V800" fill="none" stroke="#85beec" stroke-width="1.4" />
<path d="M373.400,811 V821 H384" fill="none" stroke="#85beec" stroke-width="1.4" />
<path d="M371.700,787 H376.400 C378.600,787 379.900,788.300 379.900,790.500 V802.500 L374.100,808.800 L368.200,802.500 V790.500 C368.200,788.300 369.500,787 371.700,787 Z" fill="#d9660a" stroke="none" stroke-width="0" />
<circle cx="374.100" cy="795" r="2.800" fill="#fbfbfb"/>
<circle cx="404.100" cy="809.500" r="4.200" fill="#f3f2f1"/><circle cx="404.100" cy="809.500" r="3.100" fill="#d9660a"/>
<circle cx="400.500" cy="819.100" r="6.600" fill="#f3f2f1"/><circle cx="400.500" cy="819.100" r="5.300" fill="#d9660a"/>
</g>
<g id="ic-powerapps">
<path d="M442,793.600 L440.300,791.700 C439.500,790.800 438.500,790.800 437.700,791.700 L426,805.300 C425.300,806.100 425.300,807.300 426,808.100 L437.700,821.800 C438.500,822.700 439.500,822.700 440.300,821.800 L442,819.800" fill="#fbfbfb" stroke="#962fab" stroke-width="2" stroke-linejoin="round"/>
<path d="M444,791.600 C444.700,790.800 445.700,790.800 446.400,791.600 L458.800,805.200 C459.500,806 459.500,806.800 458.800,807.600 L446.400,822 C445.700,822.800 444.700,822.800 444,822 L438.600,815.600 C437.900,814.800 437.900,814.200 438.600,813.400 L445.200,806.300 L438.600,799.200 C437.900,798.400 437.900,797.800 438.600,797 Z" fill="#fbfbfb" stroke="#962fab" stroke-width="2" stroke-linejoin="round"/>
<path d="M445.200,806.300 L452.600,798 M445.200,806.300 L452.600,814.800" fill="none" stroke="#962fab" stroke-width="2" />
</g>
<g id="ic-automate">
<path d="M481.500,791.900 H501.400 C502.200,791.900 502.800,792.200 503.300,792.800 L512.200,803.900 C512.900,804.800 512.900,805.900 512.200,806.800 L503.300,818.500 C502.800,819.100 502.200,819.400 501.400,819.400 H481.800 C480.300,819.400 479.600,818 480.600,816.800 L490.500,805.400 L480.400,794.200 C479.600,793.200 480.200,791.900 481.500,791.900 Z" fill="#fbfbfb" stroke="#1178dc" stroke-width="2.1" stroke-linejoin="round"/>
<path d="M502.300,792.200 L490.500,805.400 M507.900,800 L491.200,819.200" fill="none" stroke="#1178dc" stroke-width="2.1" />
</g>
</svg>
<div class="t" style="left:628.5px;top:408.2px;font-size:21.5px;letter-spacing:0.26px;">Branch Table</div>
<div class="t" style="left:628.5px;top:454.8px;font-size:21.5px;letter-spacing:0.46px;">Students Table</div>
<div class="t" style="left:628.5px;top:501.8px;font-size:21.5px;letter-spacing:0.15px;">Teacher Table</div>
</body>
</html>
